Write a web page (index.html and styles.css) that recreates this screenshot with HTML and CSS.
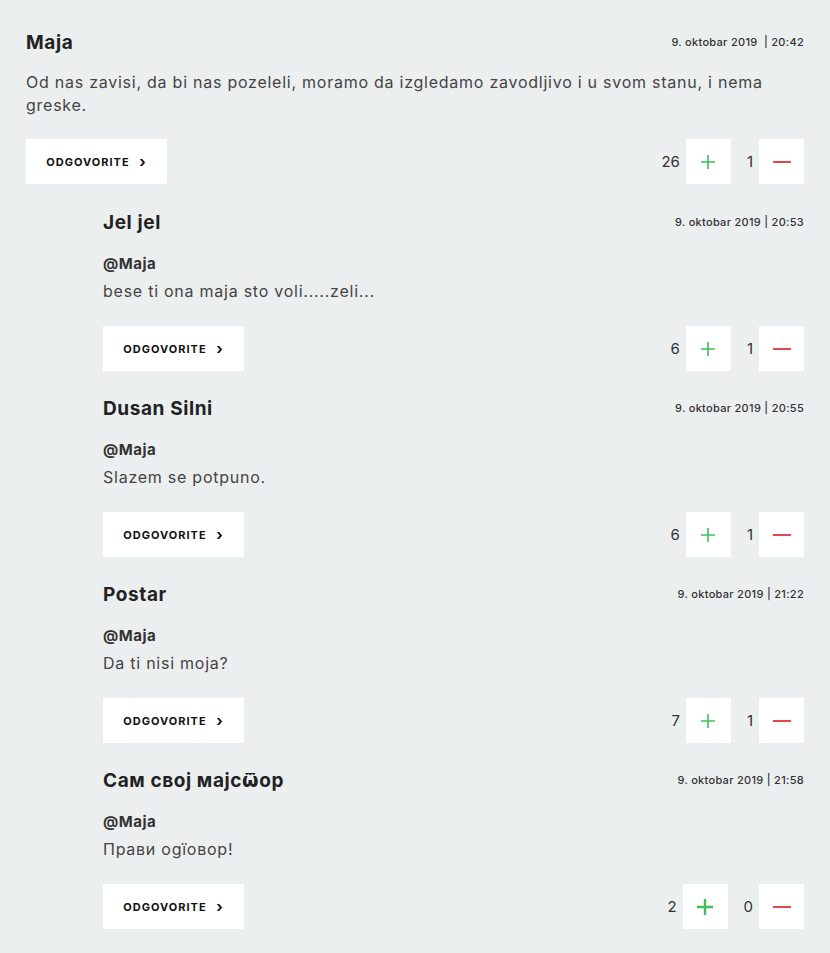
FILE: index.html
```html
<!DOCTYPE html>
<html lang="sr">
<head>
    <meta charset="UTF-8">
    <meta name="viewport" content="width=device-width, initial-scale=1.0">
    <title>Komentari</title>
    <link rel="stylesheet" href="styles.css">
</head>
<body>
    <section class="comments">

        <!-- Top level comment -->
        <article class="comment top">
            <div class="comment-head">
                <h3 class="comment-author">Maja</h3>
                <span class="comment-date">9. oktobar 2019 &nbsp;| 20:42</span>
            </div>
            <p class="comment-text">Od nas zavisi, da bi nas pozeleli, moramo da izgledamo zavodljivo i u svom stanu, i nema greske.</p>
            <div class="comment-actions">
                <button class="reply-btn">ODGOVORITE <span class="chev">&#8250;</span></button>
                <div class="votes">
                    <span class="vote-count">26</span>
                    <button class="vote-btn plus"><svg width="16" height="16" viewBox="0 0 16 16"><path d="M8 1v14M1 8h14" stroke="#3fbf5c" stroke-width="1.6"/></svg></button>
                    <span class="vote-count">1</span>
                    <button class="vote-btn minus"><svg width="18" height="16" viewBox="0 0 18 16"><path d="M0 8h18" stroke="#e2474d" stroke-width="2"/></svg></button>
                </div>
            </div>
        </article>

        <!-- Replies -->
        <article class="comment reply">
            <div class="comment-head">
                <h3 class="comment-author">Jel jel</h3>
                <span class="comment-date">9. oktobar 2019 | 20:53</span>
            </div>
            <div class="comment-mention">@Maja</div>
            <p class="comment-text">bese ti ona maja sto voli.....zeli...</p>
            <div class="comment-actions">
                <button class="reply-btn">ODGOVORITE <span class="chev">&#8250;</span></button>
                <div class="votes">
                    <span class="vote-count">6</span>
                    <button class="vote-btn plus"><svg width="16" height="16" viewBox="0 0 16 16"><path d="M8 1v14M1 8h14" stroke="#3fbf5c" stroke-width="1.6"/></svg></button>
                    <span class="vote-count">1</span>
                    <button class="vote-btn minus"><svg width="18" height="16" viewBox="0 0 18 16"><path d="M0 8h18" stroke="#e2474d" stroke-width="2"/></svg></button>
                </div>
            </div>
        </article>

        <article class="comment reply">
            <div class="comment-head">
                <h3 class="comment-author">Dusan Silni</h3>
                <span class="comment-date">9. oktobar 2019 | 20:55</span>
            </div>
            <div class="comment-mention">@Maja</div>
            <p class="comment-text">Slazem se potpuno.</p>
            <div class="comment-actions">
                <button class="reply-btn">ODGOVORITE <span class="chev">&#8250;</span></button>
                <div class="votes">
                    <span class="vote-count">6</span>
                    <button class="vote-btn plus"><svg width="16" height="16" viewBox="0 0 16 16"><path d="M8 1v14M1 8h14" stroke="#3fbf5c" stroke-width="1.6"/></svg></button>
                    <span class="vote-count">1</span>
                    <button class="vote-btn minus"><svg width="18" height="16" viewBox="0 0 18 16"><path d="M0 8h18" stroke="#e2474d" stroke-width="2"/></svg></button>
                </div>
            </div>
        </article>

        <article class="comment reply">
            <div class="comment-head">
                <h3 class="comment-author">Postar</h3>
                <span class="comment-date">9. oktobar 2019 | 21:22</span>
            </div>
            <div class="comment-mention">@Maja</div>
            <p class="comment-text">Da ti nisi moja?</p>
            <div class="comment-actions">
                <button class="reply-btn">ODGOVORITE <span class="chev">&#8250;</span></button>
                <div class="votes">
                    <span class="vote-count">7</span>
                    <button class="vote-btn plus"><svg width="16" height="16" viewBox="0 0 16 16"><path d="M8 1v14M1 8h14" stroke="#3fbf5c" stroke-width="1.6"/></svg></button>
                    <span class="vote-count">1</span>
                    <button class="vote-btn minus"><svg width="18" height="16" viewBox="0 0 18 16"><path d="M0 8h18" stroke="#e2474d" stroke-width="2"/></svg></button>
                </div>
            </div>
        </article>

        <article class="comment reply">
            <div class="comment-head">
                <h3 class="comment-author">Сам свој мајсѿор</h3>
                <span class="comment-date">9. oktobar 2019 | 21:58</span>
            </div>
            <div class="comment-mention">@Maja</div>
            <p class="comment-text">Прави оgїовор!</p>
            <div class="comment-actions">
                <button class="reply-btn">ODGOVORITE <span class="chev">&#8250;</span></button>
                <div class="votes">
                    <span class="vote-count">2</span>
                    <button class="vote-btn plus"><svg width="18" height="18" viewBox="0 0 18 18"><path d="M9 1v16M1 9h16" stroke="#3fbf5c" stroke-width="2.4"/></svg></button>
                    <span class="vote-count">0</span>
                    <button class="vote-btn minus"><svg width="18" height="16" viewBox="0 0 18 16"><path d="M0 8h18" stroke="#e2474d" stroke-width="2"/></svg></button>
                </div>
            </div>
        </article>

    </section>
</body>
</html>
```

FILE: styles.css
```css
:root {
    --page-bg: #eceff0;
    --text-dark: #222222;
    --text-body: #444444;
    --box-bg: #ffffff;
    --plus-color: #3fbf5c;
    --minus-color: #e2474d;
}

/* General Reset */
* {
    margin: 0;
    padding: 0;
    box-sizing: border-box;
}

body {
    font-family: Inter, "DejaVu Sans", sans-serif;
    background-color: var(--page-bg);
    color: var(--text-body);
    height: 953px;
    overflow: hidden;
}

/* Comment list */
.comments {
    padding: 30px 26px 0 26px;
}

.comment {
    margin-bottom: 26px;
}

.comment.reply {
    margin-left: 77px;
    margin-bottom: 25px;
}

/* Header row */
.comment-head {
    display: flex;
    justify-content: space-between;
    align-items: center;
    height: 24px;
}

.comment-author {
    font-size: 19px;
    font-weight: 700;
    color: var(--text-dark);
    letter-spacing: 0.6px;
}

.comment-date {
    font-size: 11px;
    font-weight: 500;
    color: #333;
    letter-spacing: 0.3px;
}

.comment-mention {
    margin-top: 20px;
    font-size: 15px;
    font-weight: 700;
    line-height: 20px;
    color: #333;
    letter-spacing: 0.5px;
}

.comment-text {
    margin-top: 17px;
    font-size: 16px;
    line-height: 23px;
    color: var(--text-body);
    letter-spacing: 0.75px;
}

.comment-mention + .comment-text {
    margin-top: 6px;
}

/* Actions */
.comment-actions {
    display: flex;
    justify-content: space-between;
    align-items: center;
    margin-top: 23px;
}

.comment.top .comment-actions {
    margin-top: 22px;
}

.reply-btn {
    width: 141px;
    height: 45px;
    background: var(--box-bg);
    border: none;
    font-family: inherit;
    font-size: 11px;
    font-weight: 700;
    color: #111;
    letter-spacing: 1px;
    cursor: pointer;
}

.reply-btn .chev {
    margin-left: 6px;
    font-size: 15px;
    line-height: 1;
    vertical-align: -1px;
}

.votes {
    display: flex;
    align-items: center;
}

.vote-count {
    margin: 0 6px 0 16px;
    font-size: 15px;
    color: #333;
}

.vote-btn {
    display: flex;
    align-items: center;
    justify-content: center;
    width: 45px;
    height: 45px;
    background: var(--box-bg);
    border: none;
    cursor: pointer;
}
```
